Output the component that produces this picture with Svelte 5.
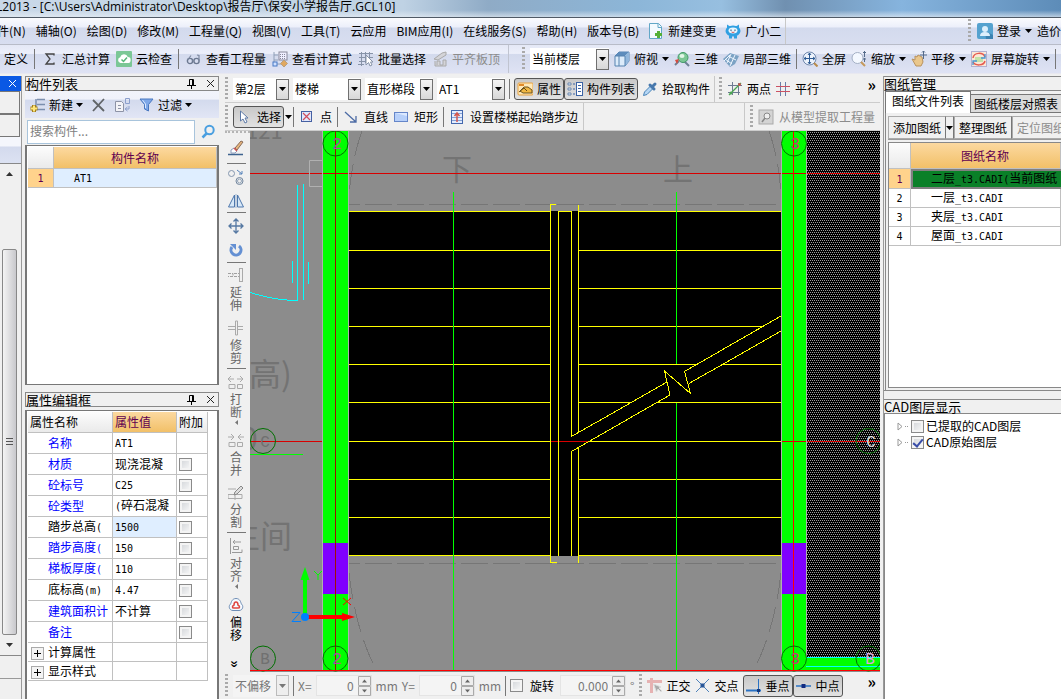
<script>
  const menus = ['件(N)', '辅轴(O)', '绘图(D)', '修改(M)', '工程量(Q)', '视图(V)', '工具(T)', '云应用', 'BIM应用(I)', '在线服务(S)', '帮助(H)', '版本号(B)'];
  const props = [
    { name: '名称', value: 'AT1', blue: true, plain: true },
    { name: '材质', value: '现浇混凝', blue: true },
    { name: '砼标号', value: 'C25', blue: true },
    { name: '砼类型', value: '(碎石混凝', blue: true },
    { name: '踏步总高(', value: '1500', active: true },
    { name: '踏步高度(', value: '150', blue: true },
    { name: '梯板厚度(', value: '110', blue: true },
    { name: '底标高(m)', value: '4.47' },
    { name: '建筑面积计', value: '不计算', blue: true },
    { name: '备注', value: '', blue: true }
  ];
  const groups = ['计算属性', '显示样式'];
  const drawings = ['二层_t3.CADI(当前图纸', '一层_t3.CADI', '夹层_t3.CADI', '屋面_t3.CADI'];
  const treads = [250.5, 288.5, 326.5, 364.5, 402.5, 441.5, 479.5, 517.5];
  const tools = [
    { icon: 'brush', h: 30 }, { sep: true },
    { icon: 'copy', h: 26 }, { icon: 'mirror', h: 22 }, { sep: true },
    { icon: 'move', h: 25 }, { icon: 'rotate', h: 24 }, { sep: true },
    { icon: 'extend', label: '延伸', h: 52 }, { icon: 'trim', label: '修剪', h: 53 }, { sep: true },
    { icon: 'break', label: '打断', h: 60, drop: true }, { icon: 'join', label: '合并', h: 50 }, { icon: 'split', label: '分割', h: 53 }, { sep: true },
    { icon: 'align', label: '对齐', h: 60, drop: true }, { icon: 'offset', label: '偏移', h: 52, on: true }
  ];
  // Latin runs are set smaller so that two of them fill one ideograph
  const runs = (t) => t.match(/[\x20-\x7e]+|[^\x20-\x7e]+/g) ?? [];
  const latin = (t) => /^[\x20-\x7e]/.test(t);
</script>

{#snippet mixed(t)}{#each runs(t) as r}{#if latin(r)}<span class="half">{r}</span>{:else}{r}{/if}{/each}{/snippet}

{#snippet caret()}<svg class="caret" width="7" height="4" viewBox="0 0 7 4" aria-hidden="true"><path d="M0 0h7L3.5 4z" fill="currentColor" /></svg>{/snippet}

{#snippet combo(label, value, size)}
  <span class="combo {size}">
    <select aria-label={label}><option>{value}</option></select>
    <span class="drop">{@render caret()}</span>
  </span>
{/snippet}

{#snippet spin(label, value, size)}
  <span class="spin {size}">
    <input type="text" aria-label={label} {value} />
    <span class="steps">
      <svg width="13" height="20" viewBox="0 0 13 20" aria-hidden="true"><path d="M.5 .5h12v9H.5zM.5 10.500h12v9H.5z" fill="#eee" stroke="#aaa" /><path d="M4 6.500h5L6.500 3.500zM4 13.500h5L6.500 16.500z" fill="#666" /></svg>
    </span>
  </span>
{/snippet}

{#snippet pin()}
  <svg class="pin" width="9" height="10" viewBox="0 0 9 10" aria-hidden="true"><path d="M2.500 6V.500h4V6M5.500 1v5M0 6.500h9M4.500 7v3" fill="none" stroke="#000" /></svg>
  <svg width="9" height="9" viewBox="0 0 9 9" aria-hidden="true"><path d="M1 1l7 7M8 1l-7 7" fill="none" stroke="#222" /></svg>
{/snippet}

{#snippet icon(name)}
  <svg class="icon" width="16" height="16" viewBox="0 0 16 16" fill="none" aria-hidden="true">
    {#if name === 'sum'}
      <path d="M12 4.500V3H4l4 5-4 5h8v-1.500" stroke="#444" stroke-width="1.300" />
    {:else if name === 'cloud'}
      <rect width="16" height="16" rx="1" fill="#7bc796" /><path d="M4.500 12a3 3 0 0 1-.3-5.800 4 4 0 0 1 7.600-.2 3 3 0 0 1-.3 6z" fill="#fff" /><path d="M5.500 8.500l2 2 3.500-4" stroke="#55b878" stroke-width="1.500" />
    {:else if name === 'glasses'}
      <circle cx="4" cy="10" r="2.600" stroke="#6b7890" stroke-width="1.400" /><circle cx="10.500" cy="10" r="2.600" stroke="#6b7890" stroke-width="1.400" /><path d="M1.500 9L5 4.500M13 9.500V4.500l-2-.5M6.500 9.500h1.500" stroke="#7d89a0" stroke-width="1.200" />
    {:else if name === 'formula'}
      <path d="M2 1v12M2 4h4M2 9h4M4 13h6" stroke="#90a0b8" /><rect x="7" y="1" width="8" height="8" fill="#eef" stroke="#889" /><path d="M8 3.500h6M8 5.500h6M8 7.500h6" stroke="#889" stroke-dasharray="1 1" /><rect x="1" y="11" width="4" height="4" fill="#cfe0ff" stroke="#4778c4" /><path d="M12 9l3.500 3.500L12 16l-3.500-3.500z" fill="#e0a860" stroke="#b8a080" />
    {:else if name === 'batch'}
      <path d="M1 2.500h14M1 6.500h14M1 10.500h7M3.500 1v14M7.500 1v11M11.500 1v5M0 13.500h6" stroke="#8793a8" /><path d="M8 4v10l2.500-2.500L12 15l2-1-1.500-3H15z" fill="#fff" stroke="#8793a8" />
    {:else if name === 'slab'}
      <path d="M2 8l8-6 4-1v3l-8 5zM3 10v5h11V9h-3v5H8v-4H5v4" fill="#d4d4d8" stroke="#aaa" />
    {:else if name === 'cube'}
      <path d="M1 5l4-4h10v9l-4 5H1z" fill="#dcebfa" stroke="#5683b0" /><path d="M1 5l4-4h10l-4 4z" fill="#5d8cbc" /><path d="M11 5l4-4v9l-4 5z" fill="#92b7dc" /><path d="M1 5h10v10M5 5v10" stroke="#5683b0" />
    {:else if name === 'orbit'}
      <path d="M1 14l4-4M10 10l5 5" stroke="#6f8296" stroke-width="2" /><circle cx="9" cy="6.500" r="5" fill="#7cc795" stroke="#419967" /><ellipse cx="8" cy="5" rx="2.500" ry="2" fill="#e2f6e6" /><path d="M1 9l4-1-2 5z" fill="#d84b3f" />
    {:else if name === 'local3d'}
      <path d="M0 8l7-6 9 3-4 8-5 3z" fill="#7ba2c4" /><path d="M2 8l7 5M5 5l8 4M8 3L4 12M12 4L7 15M1 10l6-6" stroke="#eef6ff" />
    {:else if name === 'fit'}
      <circle cx="7.500" cy="7.500" r="6.500" fill="#edf3fc" stroke="#7088ae" /><path d="M12 12l3.500 3.500" stroke="#ba8c4c" stroke-width="2" /><path d="M7.500 2v11M2 7.500h11M6 4l1.500-2L9 4M6 11l1.500 2L9 11M4 6L2 7.500 4 9M11 6l2 1.500L11 9" stroke="#2f5b94" />
    {:else if name === 'zoom'}
      <circle cx="6.500" cy="7" r="5.500" fill="#f4f8ff" stroke="#a3afc4" /><path d="M10 11l4 4" stroke="#c69a5c" stroke-width="2" /><path d="M13.500 0v6M12 2l1.500-1.500L15 2M12 8h3M13.500 7v4" stroke="#556b8a" />
    {:else if name === 'pan'}
      <path d="M1 8l3 1 0-4 2 1 1-2 2 1 2 1 1 5-2 4H5z" fill="#eac78c" stroke="#b9925e" /><path d="M12.500 0v8M9 4h7M11 1.500L12.500 0 14 1.500" stroke="#556b8a" />
    {:else if name === 'spinview'}
      <rect x=".5" y=".5" width="15" height="15" fill="#fae8d6" stroke="#b3b0cf" /><rect x="4" y="6" width="8" height="5" fill="#c3e2a8" /><path d="M2 7c1-6 10-6 12-1M14 10c-1 5-10 5-12 1" stroke="#e55b50" stroke-width="1.500" /><path d="M14 3v4h-4M2 14v-4h4" stroke="#4596d4" stroke-width="1.300" />
    {:else if name === 'newdoc'}
      <path d="M1.500.500h9l3 3v12h-12z" fill="#f3faff" stroke="#62a7c7" /><path d="M10 .5v4h4" stroke="#62a7c7" /><path d="M10.500 8v7M7 11.500h7" stroke="#54b038" stroke-width="3" />
    {:else if name === 'mascot'}
      <ellipse cx="8" cy="8" rx="7.500" ry="5.500" fill="#30a0e2" /><path d="M2 6V1.500L6 4zM14 6V1.500L10 4zM4 12.500h3v3H4zM9 12.500h3v3H9z" fill="#30a0e2" /><ellipse cx="8" cy="7.500" rx="4.500" ry="3" fill="#e8f6ff" /><path d="M6 6.500v1.500M10 6.500v1.500" stroke="#19557e" /><path d="M6.500 9q1.500 1 3 0" stroke="#d05656" />
    {:else if name === 'user'}
      <rect width="16" height="16" rx="2" fill="#55a2cf" /><path d="M8 8l8 4v4H9z" fill="#3b82b1" /><circle cx="8" cy="6" r="3" fill="#dceffc" /><path d="M3 13q0-4 5-4t5 4z" fill="#dceffc" />
    {:else if name === 'new'}
      <path d="M7 2.500h8M7 7.500h8M7 12.500h8M6 2v10" stroke="#7b8fae" stroke-width="1.500" /><path d="M4 8v7M.500 11.500h7" stroke="#a27e1c" stroke-width="4" /><path d="M4 8.500v6M1 11.500h6" stroke="#ffe77a" stroke-width="2" />
    {:else if name === 'del'}
      <path d="M2 3l11 11M13 2L2 14" stroke="#606468" stroke-width="1.800" />
    {:else if name === 'dup'}
      <path d="M.500 4.500h6l2 2v8h-8z" fill="#f3f3f7" stroke="#8d93a6" /><path d="M3 8.500h3M3 11.500h3" stroke="#8d93a6" /><path d="M10.500 1.500h4v5h-4zM14 9v3h-3M12.500 10L10 12l2.500 2" stroke="#8c9fcc" />
    {:else if name === 'filter'}
      <path d="M1 2h13L9.500 7.500V14l-4-2V7.500z" fill="#7fa8e8" stroke="#4a78c0" /><path d="M3.500 3l3 4v4" stroke="#d9e8ff" />
    {:else if name === 'attr'}
      <rect x="1" y="2" width="15" height="12" rx="1" fill="#ffe9b8" stroke="#e8a13f" /><path d="M2 4h5" stroke="#e08a28" stroke-width="2" /><path d="M3 10l4-4h4l4 3v3H6z" fill="#f0b742" stroke="#6a5221" /><path d="M2 11l5-4 3 3" stroke="#654d1c" />
    {:else if name === 'list'}
      <path d="M1 2h3v2H1zM1 7h3v2H1zM1 12h3v2H1z" fill="#e6f0ff" stroke="#6d89ae" /><rect x="9.500" y="1.500" width="6" height="13" fill="#fff" stroke="#3b63a5" /><path d="M11 4.500h3M11 7.500h3M11 10.500h3M6 3h2M6 8h2M6 13h2" stroke="#3b63a5" />
    {:else if name === 'pick'}
      <path d="M1.500 14.500l1-3.500 6-6 2.500 2.500-6 6z" fill="#b5d6f4" stroke="#4883b8" /><path d="M8 4l4 4M10 6l3-3" stroke="#4778ac" stroke-width="3" stroke-linecap="round" />
    {:else if name === 'twopt'}
      <path d="M1 4.500h14M1 11.500h12M5.500 1v13M11.500 2v12" stroke="#6e7b93" /><path d="M2 14L14 2" stroke="#4ca553" stroke-width="1.200" /><circle cx="4" cy="12" r="1.500" fill="#4ca553" /><circle cx="12.500" cy="3.500" r="1.500" fill="#c4574e" />
    {:else if name === 'para'}
      <path d="M5.500 1v14M10.500 1v14" stroke="#6a7da8" /><path d="M1 5.500h14M1 10.500h14" stroke="#cb5263" />
    {:else if name === 'cursor'}
      <path d="M4.500 2v10l2.500-2 2 4 2-1-2-4h3z" fill="#fff" stroke="#5e7aa7" />
    {:else if name === 'point'}
      <rect x="2.500" y="2.500" width="10" height="10" fill="#dfe9ff" stroke="#4560a2" /><path d="M4 4l7 7M11 4l-7 7" stroke="#d14d5d" stroke-width="1.200" />
    {:else if name === 'line'}
      <path d="M2 3l11 10M13 7v6H7" stroke="#4d6ca5" stroke-width="1.300" />
    {:else if name === 'rect'}
      <rect x="1.500" y="3.500" width="13" height="9" fill="#b7d0fa" stroke="#6586c9" /><path d="M2 4h12v3z" fill="#dce9ff" />
    {:else if name === 'step'}
      <rect x="2.500" y="1.500" width="11" height="13" fill="#e3edff" stroke="#4468ad" /><path d="M3 4.500h10M3 8.500h10M3 11.500h10" stroke="#85a1d5" /><path d="M8 13V5M5.500 7L8 4l2.500 3" stroke="#d4554d" stroke-width="1.500" />
    {:else if name === 'extract'}
      <rect x="1" y="1" width="14" height="14" fill="#d4d4d4" stroke="#aaa" /><circle cx="9" cy="7" r="3" fill="#eee" stroke="#888" /><path d="M7 9l-3 4" stroke="#888" stroke-width="1.500" />
    {:else if name === 'ortho'}
      <path d="M4.500 0v15M0 3.500h15" stroke="#e6b2b2" stroke-width="3" /><path d="M6.500 6l3 8 1.500-3 3 3 1-1-3-3 2-1z" fill="#aaa" stroke="#ddd" />
    {:else if name === 'cross'}
      <path d="M1 1l13 13M14 1L1 14" stroke="#4f83bb" /><rect x="5.500" y="5.500" width="4" height="4" fill="#285698" />
    {:else if name === 'perp'}
      <path d="M0 12.500h15" stroke="#2a72c4" stroke-width="2" /><path d="M12.500 1v15" stroke="#2a72c4" /><rect x="11" y="11" width="3" height="3" fill="#14387c" />
    {:else if name === 'mid'}
      <path d="M0 8h15" stroke="#2a72c4" stroke-width="1.500" /><rect x="5.500" y="6" width="4" height="4" fill="#122b80" />
    {:else if name === 'brush'}
      <path d="M7 8l6-7 2 1-6 8z" fill="#e7b57c" stroke="#886d5b" /><path d="M3 10l3-2 3 3-2 2H3z" fill="#fff" stroke="#8b9cbd" /><path d="M6 8l3 3" stroke="#cd5454" stroke-width="1.500" /><path d="M0 14.500h15" stroke="#3e638f" stroke-width="1.500" />
    {:else if name === 'copy'}
      <circle cx="3.500" cy="4.500" r="3" stroke="#8496ae" /><circle cx="11.500" cy="12" r="3.500" stroke="#72869e" /><circle cx="11.500" cy="12" r="2" stroke="#93a4b8" /><path d="M9 1l5 4M14 2v3h-3" stroke="#5783ba" />
    {:else if name === 'mirror'}
      <path d="M6.500 2v12H.5zM9.500 2v12h6z" fill="#d7e8f8" stroke="#4e77ac" /><path d="M8 1v14" stroke="#9ab3d0" />
    {:else if name === 'move'}
      <path d="M8 1v14M1 8h14M5.500 3.500L8 1l2.500 2.500M5.500 12.500L8 15l2.500-2.500M3.500 5.500L1 8l2.500 2.500M12.500 5.500L15 8l-2.500 2.500" stroke="#5578a2" stroke-width="1.300" />
    {:else if name === 'rotate'}
      <path d="M4 5a5 5 0 1 0 7-1" stroke="#6490d3" stroke-width="3" /><path d="M2 2h6v6z" fill="#6490d3" />
    {:else if name === 'extend'}
      <path d="M0 6.500h5v3H0M6 6.500h5M6 9.500h5" stroke="#a0a0a0" stroke-dasharray="3 1" /><rect x="11.500" y="1.500" width="3" height="13" stroke="#aaa" />
    {:else if name === 'trim'}
      <path d="M7.500 1v14h2V1zM0 6.500h7M0 9.500h7M10 6.500h5M10 9.500h5" stroke="#aaa" />
    {:else if name === 'break' || name === 'join'}
      <path d="M1 10.500h6v4H1zM9.500 10.500h5v4h-5z" stroke="#aaa" /><path d={name === 'break' ? 'M0 5h6M3 2L0 5l3 3M9 5h6M12 2l3 3-3 3' : 'M0 5h6M3 2l3 3-3 3M10 5h6M13 2l-3 3 3 3'} stroke="#aaa" />
    {:else if name === 'split'}
      <path d="M0 10.500h14v4H0zM7 8v8M0 5h8" stroke="#aaa" /><path d="M6 11l1-3 6-6 2 2-6 6z" fill="#ddd" stroke="#888" />
    {:else if name === 'align'}
      <path d="M2.500 0v16M5.500 8.500h5v3h-5zM4 14.500h10v-3M13 4H5M7 2L5 4l2 2" stroke="#999" />
    {:else if name === 'offset'}
      <path d="M8 1.500c4 0 5 4 5 5 3 2 2 7-2 7H5c-4 0-5-5-2-7 0-1 1-5 5-5z" stroke="#6e8db5" fill="#f5faff" /><path d="M8 5c2 0 2 2 2 3 2 1 2 3 0 3H6c-2 0-2-2 0-3 0-1 0-3 2-3z" stroke="#df4742" stroke-width="1.600" />
    {/if}
  </svg>
{/snippet}

<div class="app">
  <header class="title">L2013 - [C:\Users\Administrator\Desktop\报告厅\保安小学报告厅.GCL10]</header>

  <nav class="menu">
    {#each menus as m}<button>{m}</button>{/each}
    <button class="doc">{@render icon('newdoc')}新建变更</button>
    <button class="doc">{@render icon('mascot')}广小二</button>
    <i class="edge"></i>
    <span class="push"></span>
    <i class="grip"></i>
    <button>{@render icon('user')}登录{@render caret()}</button>
    <button class="cut">造价</button>
  </nav>

  <div class="ribbon">
    <div class="ribbon-main">
      <button>定义</button><i class="rule"></i>
      <button>{@render icon('sum')}汇总计算</button>
      <button>{@render icon('cloud')}云检查</button><i class="rule"></i>
      <button>{@render icon('glasses')}查看工程量</button>
      <button>{@render icon('formula')}查看计算式</button>
      <button>{@render icon('batch')}批量选择</button>
      <button disabled>{@render icon('slab')}平齐板顶</button>
    </div>
    <div class="ribbon-view">
      <i class="grip"></i>
      {@render combo('楼层范围', '当前楼层', 'mid')}
      <button>{@render icon('cube')}俯视{@render caret()}</button>
      <button>{@render icon('orbit')}三维</button>
      <button>{@render icon('local3d')}局部三维</button><i class="rule"></i>
      <button>{@render icon('fit')}全屏</button>
      <button>{@render icon('zoom')}缩放{@render caret()}</button>
      <button>{@render icon('pan')}平移{@render caret()}</button>
      <button>{@render icon('spinview')}屏幕旋转{@render caret()}</button><i class="rule"></i>
      <button aria-label="查看">{@render icon('glasses')}</button>
    </div>
  </div>

  <main class="work">
    <aside class="strip">
      <div class="strip-head"><svg width="9" height="9" viewBox="0 0 9 9" aria-hidden="true"><path d="M1 1l7 7M8 1l-7 7" stroke="#fff" /></svg></div>
      <div class="strip-btn"></div>
      <div class="strip-btn"></div>
      <div class="strip-bar"></div>
      <div class="scroll">
        <svg width="7" height="4" viewBox="0 0 7 4" aria-hidden="true"><path d="M0 4h7L3.500 0z" fill="#333" /></svg>
        <div class="thumb"><i></i></div>
        <svg width="7" height="4" viewBox="0 0 7 4" aria-hidden="true"><path d="M0 0h7L3.500 4z" fill="#333" /></svg>
      </div>
      <div class="strip-foot"></div>
    </aside>

    <div class="left">
      <section class="panel members">
        <h2>构件列表<span>{@render pin()}</span></h2>
        <div class="bar">
          <button>{@render icon('new')}新建{@render caret()}</button>
          <button aria-label="删除">{@render icon('del')}</button>
          <button aria-label="复制">{@render icon('dup')}</button>
          <button>{@render icon('filter')}过滤{@render caret()}</button>
        </div>
        <div class="search">
          <input type="text" placeholder="搜索构件..." aria-label="搜索构件" />
          <button aria-label="搜索"><svg width="15" height="15" viewBox="0 0 15 15" fill="none" aria-hidden="true"><circle cx="8.500" cy="6" r="4.200" stroke="#4a9fe0" stroke-width="2" /><path d="M5.500 9.500L1.500 13.500" stroke="#4a9fe0" stroke-width="2.500" /></svg></button>
        </div>
        <div class="well">
          <table class="names">
            <thead><tr><th class="no"></th><th class="gold">构件名称</th></tr></thead>
            <tbody><tr><td class="no on"><span class="half">1</span></td><td class="sel"><span class="half">AT1</span></td></tr></tbody>
          </table>
        </div>
      </section>

      <section class="panel attrs">
        <h2>属性编辑框<span>{@render pin()}</span></h2>
        <div class="well">
          <table class="props">
            <thead><tr><th>属性名称</th><th class="gold">属性值</th><th>附加</th></tr></thead>
            <tbody>
              {#each props as p}
                <tr>
                  <td class="key" class:blue={p.blue}>{@render mixed(p.name)}</td>
                  <td class:sel={p.active}>{@render mixed(p.value)}</td>
                  <td class="tick">{#if !p.plain}<input type="checkbox" aria-label={p.name} />{/if}</td>
                </tr>
              {/each}
              {#each groups as g}
                <tr class="group"><td><button aria-label={g}><svg width="7" height="7" viewBox="0 0 7 7" aria-hidden="true"><path d="M0 3.500h7M3.500 0v7" stroke="#000" /></svg></button>{g}</td><td></td><td></td></tr>
              {/each}
            </tbody>
          </table>
        </div>
      </section>
    </div>

    <section class="center">
      <div class="row">
        <i class="grip"></i>
        {@render combo('楼层', '第2层', 'small')}
        {@render combo('构件类型', '楼梯', 'mid')}
        {@render combo('构件', '直形梯段', 'mid')}
        {@render combo('名称', 'AT1', 'mid')}
        <i class="rule"></i>
        <button class="down">{@render icon('attr')}属性</button>
        <button class="down next">{@render icon('list')}构件列表</button>
        <button>{@render icon('pick')}拾取构件</button>
        <i class="edge"></i><i class="grip"></i>
        <button>{@render icon('twopt')}两点</button>
        <button>{@render icon('para')}平行</button>
        <span class="push"></span><span class="more">»</span>
      </div>
      <div class="row draw">
        <i class="grip"></i>
        <button class="down">{@render icon('cursor')}选择</button>{@render caret()}
        <i class="rule"></i>
        <button>{@render icon('point')}点</button><i class="rule"></i>
        <button>{@render icon('line')}直线</button>
        <button>{@render icon('rect')}矩形</button><i class="rule"></i>
        <button>{@render icon('step')}设置楼梯起始踏步边</button><i class="edge"></i>
        <span class="push"></span><i class="edge"></i><i class="grip"></i>
        <button disabled>{@render icon('extract')}从模型提取工程量</button>
      </div>

      <div class="stage">
        <div class="tools">
          {#each tools as t}
            {#if t.sep}<i></i>{:else}
              <button style:height="{t.h}px" class:dim={t.label && !t.on} aria-label={t.label ?? t.icon}>
                {@render icon(t.icon)}
                {#if t.label}<span>{t.label}</span>{/if}
                {#if t.drop}<svg width="3" height="5" viewBox="0 0 3 5" aria-hidden="true"><path d="M3 0v5L0 2.500z" fill="#777" /></svg>{/if}
              </button>
            {/if}
          {/each}
          <b>»</b>
        </div>

        <svg class="cad" role="img" aria-label="楼梯平面图">
          <defs>
            <pattern id="mesh" width="4" height="4" patternUnits="userSpaceOnUse">
              <rect width="4" height="4" fill="#000" />
              <path d="M0 0h1v1H0zM2 0h1v1H2zM1 2h1v1H1zM3 2h1v1H3z" fill="#a0a0a0" />
            </pattern>
          </defs>
          <g transform="translate(-250 -131)">
            <g class="note">
              <text x="246" y="139" font-size="22">121</text>
              <text x="442" y="180" font-size="30">下</text>
              <text x="663" y="180" font-size="30">上</text>
              <text x="217" y="386" font-size="32">标高)</text>
              <text x="240" y="450" font-size="32">0</text>
              <text x="228" y="548" font-size="32">生间</text>
            </g>
            <g fill="none" stroke="#767676" shape-rendering="crispEdges">
              <path d="M333 204.500h448M333 563.500h448" stroke-dasharray="27 5" />
              <path d="M362 131q-10 28-13 64M769 131q10 28 12 64M349 573q7 60 28 98M781 573q-7 60-28 98" stroke-dasharray="26 8" />
            </g>
            <rect x="807" y="131" width="74" height="527" fill="url(#mesh)" shape-rendering="crispEdges" />
            <rect x="806" y="657" width="75" height="13" fill="#0f0" />
            <path d="M806 657.500h75M806 666.500h75" stroke="#0ff" />
            <path d="M250 173.500h631M250 441.500h73M781 441.500h100" stroke="#d80000" />
            <rect x="349" y="211" width="432" height="345" fill="#000" />
            <g fill="#0f0"><rect x="323" y="131" width="25" height="540" /><rect x="782" y="131" width="24" height="540" /></g>
            <g fill="#8000ff"><rect x="323" y="543" width="25" height="51" /><rect x="782" y="543" width="24" height="51" /></g>
            <path d="M322.500 131v540M348.500 131v540M781.500 131v540M806.500 131v526M322 160.500h-12.500v26H322" fill="none" stroke="#b0b0b0" />
            <path d="M323 173.500h25M782 173.500h24M782 441.500h24" stroke="#d80000" />
            <path d="M335.500 131v540" stroke="#a01000" /><path d="M793.500 131v540" stroke="#f00" />
            <path d="M551 441.500h38" stroke="#d80000" />
            <g fill="none" stroke="#ff0" shape-rendering="crispEdges">
              {#each treads as y}
                <path d="M349 {y}H551" />
                {#if y === 441.5}<path d="M589 {y}H781" />
                {:else if y === 402.5}<path d="M579 {y}h52M657 {y}H781" />
                {:else if y === 364.5}<path d="M579 {y}h118M723 {y}h58" />
                {:else if y === 326.5}<path d="M579 {y}h183" />
                {:else}<path d="M579 {y}H781" />{/if}
              {/each}
              <path d="M349 211.500h202M579 211.500h202M349 555.500h202M579 555.500h202M558 211.500h13" />
              <path d="M556 204.500h-5.500V562.500h6M558.500 211v345M571.500 211v225M571.500 451v105M578.500 205v227M578.500 447v116" />
              <path d="M571.500 436.500L667 382M571.500 451.500L670 395 664.500 371 690.500 393.500 684.500 371.500 781 316M689 383.500L781 331" />
            </g>
            <path d="M453.500 192v479M676.500 192v172M676.500 403v268M250 454.500h53" stroke="#0f0" />
            <path d="M297.500 185v116M303.500 184v116M292.500 261v22M308.500 262v22M250 292.500q25 8 48 8" fill="none" stroke="#0ff" shape-rendering="crispEdges" />
            <g fill="none" stroke="#007000">
              <circle cx="335.500" cy="143.500" r="12.500" /><circle cx="335.500" cy="658.500" r="12.500" />
              <circle cx="794" cy="143.500" r="12.500" /><circle cx="794" cy="658.500" r="12.500" />
              <circle cx="263" cy="441" r="12.500" /><circle cx="263" cy="658.500" r="12.500" />
              <circle cx="868.500" cy="441" r="12.500" /><circle cx="868.500" cy="658.500" r="12.500" />
            </g>
            <g class="axis">
              <text x="337" y="149" fill="#a850a0">2</text><text x="337" y="664" fill="#a850a0">2</text>
              <text x="795" y="149" fill="#c04070">3</text><text x="795" y="664" fill="#c04070">3</text>
              <text x="265" y="447" fill="#707070">C</text><text x="265" y="664" fill="#707070">B</text>
              <text x="871" y="447" fill="#ddd">C</text><text x="870" y="664" fill="#d8a8d8">B</text>
            </g>
            <path d="M305 617v-38" stroke="#0f0" stroke-width="4" /><path d="M305 567l4.500 13h-9z" fill="#0f0" />
            <path d="M305 617h38" stroke="#f00" stroke-width="4" /><path d="M355 617l-13 4v-8z" fill="#f00" />
            <circle cx="305" cy="617" r="4" fill="#0080ff" />
            <path d="M314 571l4 4 4-4M318 575v5" fill="none" stroke="#0f0" /><path d="M343 598l8 7M351 598l-8 7" stroke="#f00" /><path d="M292 612.500h8l-8 9h9" fill="none" stroke="#0080ff" />
            <path d="M250 670.500h631" stroke="#f00" />
          </g>
        </svg>
      </div>

      <div class="row snap">
        <i class="grip"></i>
        <span class="grey">{@render combo('偏移方式', '不偏移', 'small')}</span>
        <i class="rule"></i>
        <span class="unit">X=</span>{@render spin('X', '0', '')}<span class="unit">mm</span>
        <span class="unit">Y=</span>{@render spin('Y', '0', '')}<span class="unit">mm</span>
        <i class="rule"></i>
        <label><input type="checkbox" />旋转</label>
        {@render spin('旋转角度', '0.000', 'wide')}<span class="unit">°</span>
        <i class="grip"></i>
        <button>{@render icon('ortho')}正交</button>
        <button>{@render icon('cross')}交点</button>
        <button class="down">{@render icon('perp')}垂点</button>
        <button class="down next">{@render icon('mid')}中点</button>
        <span class="push"></span><span class="more">»</span>
      </div>
    </section>

    <aside class="right">
      <section class="drawings">
        <h2>图纸管理</h2>
        <div class="tabs"><button class="on">图纸文件列表</button><button>图纸楼层对照表</button></div>
        <div class="sheet">
          <div class="acts"><button>添加图纸</button><button class="tiny" aria-label="更多">{@render caret()}</button><button>整理图纸</button><button disabled>定位图纸</button></div>
          <div class="files">
            <table>
              <thead><tr><th class="no"></th><th class="gold">图纸名称</th></tr></thead>
              <tbody>
                {#each drawings as d, i}
                  <tr class:current={i === 0}><td class="no" class:on={i === 0}><span class="half">{i + 1}</span></td><td>{@render mixed(d)}</td></tr>
                {/each}
              </tbody>
            </table>
          </div>
        </div>
      </section>
      <section class="layers">
        <h2>CAD图层显示</h2>
        <div class="tree">
          <label><svg width="12" height="9" viewBox="0 0 12 9" aria-hidden="true"><path d="M1 1v7l4-3.500z" fill="#fff" stroke="#999" /><path d="M8 4.500h4" stroke="#999" stroke-dasharray="1 1" /></svg><input type="checkbox" />已提取的CAD图层</label>
          <label><svg width="12" height="9" viewBox="0 0 12 9" aria-hidden="true"><path d="M1 1v7l4-3.500z" fill="#fff" stroke="#999" /><path d="M8 4.500h4" stroke="#999" stroke-dasharray="1 1" /></svg><input type="checkbox" checked />CAD原始图层</label>
        </div>
      </section>
    </aside>
  </main>
</div>

<style>
  :global(body) { margin: 0; overflow: hidden; }
  .app { height: 100vh; display: flex; flex-direction: column; overflow: hidden; background: #f0f0f0; color: #000; font: 12px/16px "Noto Sans CJK SC", "Noto Sans", sans-serif; white-space: nowrap; }
  .app * { box-sizing: border-box; }
  button, input, select { font: inherit; color: inherit; margin: 0; padding: 0; border: 0; background: none; border-radius: 0; min-width: 0; }
  button { display: inline-flex; align-items: center; gap: 4px; white-space: nowrap; }
  button:disabled { color: #8c8c8c; }
  svg { flex: none; display: block; }
  h2 { font: inherit; margin: 0; }
  table { border-collapse: separate; border-spacing: 0; table-layout: fixed; }
  th, td { font-weight: normal; padding: 0; text-align: left; overflow: hidden; }
  .half { font-family: "DejaVu Sans Mono", monospace; font-size: 10px; }
  .push { flex: 1; }

  .title { flex: none; height: 18px; padding-bottom: 3px; border-bottom: 1px solid #505a66; line-height: 14px; font-family: "Open Sans", "Noto Sans CJK SC", sans-serif; background: linear-gradient(#ffffff00 60%, #e8eef4aa), linear-gradient(90deg, #c9d8e8, #bfd2e4 38%, #8fabc6 46%, #8cb6d8 60%, #97bfe0 68%, #7090b0 74%, #86b4de 85%, #5d8cb8); text-indent: -4px; }
  .menu { flex: none; height: 27px; display: flex; align-items: center; gap: 10px; background: linear-gradient(#fafbfe 0, #eceffa 35%, #d3daed 38%, #d8def0); border-bottom: 1px solid #b8bcc8; overflow: hidden; }
  .menu > button:first-child { margin-left: -3px; }
  .menu .doc { margin-left: -1px; }
  .menu .edge { margin-left: -6px; }
  .menu .grip { margin-right: -4px; }
  .menu .cut { margin-left: -5px; }

  .edge { width: 1px; align-self: stretch; background: #c8c8c8; flex: none; }
  .rule { width: 1px; height: 20px; background: #777; flex: none; }
  .grip { width: 3px; height: 24px; flex: none; background: repeating-linear-gradient(#aaa 0 2px, transparent 2px 4px); }

  .ribbon { flex: none; height: 29px; display: flex; background: linear-gradient(#e4e8f6 0, #eceffa 30%, #d3daed 34%, #dfe3f4); border-bottom: 1px solid #e8e8f0; overflow: hidden; }
  .ribbon > div { display: flex; align-items: center; gap: 5px; }
  .ribbon .ribbon-main { width: 509px; flex: none; padding-left: 4px; gap: 6px; border-right: 1px solid #c0c4d0; }
  .ribbon .ribbon-main .rule { margin-right: 1px; }
  .ribbon .ribbon-view { padding-left: 13px; }

  .combo { display: grid; align-items: center; background: #fff; height: 22px; flex: none; }
  .combo > * { grid-area: 1 / 1; }
  .combo select { appearance: none; width: 100%; height: 20px; padding-left: 2px; outline: none; }
  .combo .drop { justify-self: end; width: 13px; height: 21px; display: flex; align-items: center; justify-content: center; border: 1px solid #707070; background: linear-gradient(#f4f4f4, #d8d8d8); pointer-events: none; }
  .combo.small { width: 56px; }
  .combo.mid { width: 68px; }
  .ribbon .combo { width: 79px; }

  .work { flex: 1; min-height: 0; display: grid; grid-template-columns: 22px 194px minmax(0, 1fr) 178px; column-gap: 3px; padding-top: 2px; }

  .strip { display: flex; flex-direction: column; border-right: 1px solid #999; }
  .strip-head { height: 15px; background: #0a58e4; display: flex; align-items: center; justify-content: flex-end; padding-right: 4px; }
  .strip-btn { height: 23px; border: 1px solid #777; border-left: 0; margin-right: 1px; }
  .strip-bar { height: 27px; background: linear-gradient(#f4f6fc 35%, #d3daed 38%, #dce2f2); border-bottom: 1px solid #888; }
  .scroll { flex: 1; display: flex; flex-direction: column; align-items: center; padding: 8px 4px 8px 2px; border-bottom: 1px solid #888; background: #f0f0f0; }
  .thumb { flex: 1; width: 15px; margin: 73px 0 8px; border: 1px solid #888; border-radius: 2px; background: linear-gradient(90deg, #f4f4f4, #c8c8cc); display: flex; align-items: center; justify-content: center; }
  .thumb i { width: 7px; height: 8px; background: repeating-linear-gradient(#555 0 1px, transparent 1px 3px); }
  .strip-foot { height: 43px; background: linear-gradient(#f0f0f0 22px, #999 22px 23px, #f0f0f0 23px); }

  .left { display: flex; flex-direction: column; gap: 7px; min-height: 0; }
  .panel { display: flex; flex-direction: column; }
  .members { height: 309px; }
  .attrs { flex: 1; min-height: 0; }
  .panel h2 { flex: none; height: 15px; line-height: 13px; font-size: 13px; border: 1px solid #888; display: flex; justify-content: space-between; }
  .panel h2 span { display: flex; align-items: center; gap: 10px; padding-right: 3px; }
  .bar { flex: none; height: 27px; display: flex; align-items: center; gap: 8px; padding-left: 5px; background: linear-gradient(#f2f4fb 0, #f0f2fa 30%, #d3daed 34%, #e2e6f5); }
  .bar button { gap: 3px; }
  .search { flex: none; height: 27px; display: flex; align-items: center; gap: 6px; padding-left: 2px; }
  .search input { width: 168px; height: 24px; background: #fff; border: 1px solid #a8c4dc; padding: 0 2px 3px; outline: none; }
  .search input::placeholder { color: #808080; opacity: 1; }
  .well { flex: 1; min-height: 0; overflow: hidden; background: #fff; border: 1px solid #777; border-width: 1px 2px; padding: 1px; }
  .attrs .well { margin-top: 3px; border-bottom: 0; }
  th { background: linear-gradient(#fcfcfc, #eaeaea); border-right: 1px solid #c0c0c0; border-bottom: 1px solid #c0c0c0; }
  td { border-right: 1px solid #c0c0c0; border-bottom: 1px solid #c0c0c0; }
  th.gold { background: linear-gradient(#fcd9a0, #f2c068); color: #600050; }
  td.on { background: #ffd38c; color: #600050; }
  .sel { background: #dfeeff; }
  .names { width: 189px; }
  .names .no { width: 26px; text-align: center; }
  .names th { height: 22px; text-align: center; line-height: 16px; }
  .names td { height: 19px; line-height: 16px; }
  .names td.sel { padding-left: 20px; }
  .props { width: 180px; }
  .props th { height: 21px; padding-left: 2px; line-height: 16px; }
  .props th:nth-child(1) { width: 85px; }
  .props th:nth-child(2) { width: 64px; }
  .props td { height: 21px; padding-left: 2px; line-height: 16px; }
  .props .key { padding-left: 20px; }
  .props .blue { color: #0000ff; }
  .props .group td { height: 19px; }
  .group button { width: 13px; height: 13px; border: 1px solid #aaa; justify-content: center; margin: 0 4px 0 1px; vertical-align: middle; background: #f4f4f4; }
  input[type='checkbox'] { appearance: none; flex: none; width: 13px; height: 13px; border: 1px solid #8a8a8a; background: linear-gradient(135deg, #cfd2d6, #fbfbfb); box-shadow: inset 0 0 0 2px #f4f4f4; display: grid; place-items: center; }
  input[type='checkbox']:checked::before { content: ''; width: 4px; height: 8px; margin-bottom: 2px; border: solid #3a4ea8; border-width: 0 2px 2px 0; transform: rotate(40deg); }

  .center { display: flex; flex-direction: column; min-width: 0; min-height: 0; padding-left: 3px; }
  .row { flex: none; height: 27px; display: flex; align-items: center; gap: 4px; border-bottom: 1px solid #ccc; }
  .row.draw { height: 28px; padding-right: 5px; gap: 5px; }
  .down { height: 22px; padding: 0 2px; border: 1px solid #555; border-radius: 3px; background: linear-gradient(#c8c8c8, #e2e2e2); }
  .down.next { margin-left: -4px; }
  .row .grip { margin-right: 1px; }
  .draw .grip { margin-right: 0; }
  .draw .caret { margin: 0 -4px; }
  .draw button { gap: 5px; }
  .more { font-size: 16px; font-weight: bold; padding: 0 4px 10px; }
  .snap { border: 0; }
  .snap .unit, .grey { color: #777; }
  .grey .drop { border-color: #bbb; background: #eee; }
  .grey .combo { background: #f4f4f4; }
  .snap label { display: flex; align-items: center; gap: 7px; padding: 0 2px 0 0; }
  .spin { display: flex; align-items: center; flex: none; width: 56px; height: 21px; border: 1px solid #e4e4e4; background: #f4f4f4; color: #777; }
  .spin.wide { width: 66px; }
  .spin input { flex: 1; width: 20px; text-align: right; padding-right: 4px; outline: none; }

  .stage { flex: 1; min-height: 0; display: flex; }
  .tools { flex: none; width: 25px; padding-right: 3px; display: flex; flex-direction: column; align-items: center; overflow: hidden; border-top: 2px dotted #b4b4b4; }
  .tools > * { flex: none; }
  .tools > i { width: 19px; height: 1px; background: #777; }
  .tools button { width: 20px; flex-direction: column; justify-content: center; gap: 2px; }
  .tools button span { width: 12px; white-space: normal; line-height: 13px; }
  .tools .dim { color: #666; }
  .tools b { font-size: 14px; line-height: 14px; transform: rotate(90deg); margin-top: 12px; }
  .cad { flex: 1; min-width: 0; height: 100%; background: #8c8c8c; }
  .note { fill: #737373; font-family: "Noto Sans CJK SC", sans-serif; }
  .axis { font: 16px "Liberation Mono", monospace; text-anchor: middle; }

  .right { display: flex; flex-direction: column; min-width: 0; overflow: hidden; border-left: 1px solid #999; }
  .right h2 { flex: none; height: 15px; font-size: 13px; line-height: 13px; border: 1px solid #888; border-width: 1px 0; }
  .drawings { height: 315px; flex: none; display: flex; flex-direction: column; border-bottom: 1px solid #888; }
  .tabs { flex: none; display: flex; align-items: flex-end; height: 22px; padding-left: 1px; }
  .tabs button { height: 19px; padding: 0 3px; flex: none; border: 1px solid #777; background: #dcdcdc; }
  .tabs .on { height: 22px; padding: 0 6px 3px; background: #fff; border-bottom: 0; margin-right: -1px; }
  .sheet { flex: 1; min-height: 0; margin-left: 1px; border-left: 1px solid #888; padding: 3px 0 2px 2px; display: flex; flex-direction: column; }
  .acts { flex: none; display: flex; height: 24px; border-bottom: 1px solid #999; }
  .acts button { flex: none; height: 23px; padding: 0 4px; border: 1px solid #aaa; border-right-color: #777; }
  .acts .tiny { padding: 0; width: 8px; border-left: 0; justify-content: center; overflow: hidden; }
  .files { flex: 1; margin-top: 2px; background: #fff; border: 1px solid #888; border-right: 0; overflow: hidden; }
  .files table { width: 172px; }
  .files th { height: 26px; text-align: center; padding-right: 1px; }
  .files .no { width: 22px; text-align: center; padding: 0; }
  .files td { height: 19px; line-height: 16px; padding-left: 20px; }
  .files .current td { line-height: 14px; }
  .files .current td:last-child { background: #0a8028; border: 2px solid #808080; border-right: 0; padding-left: 18px; }
  .layers { flex: 1; min-height: 0; display: flex; flex-direction: column; margin-top: 8px; }
  .tree { flex: 1; background: #fff; padding: 4px 0 0 12px; border-left: 1px solid #888; }
  .tree label { display: flex; align-items: center; gap: 2px; height: 16px; }
</style>
